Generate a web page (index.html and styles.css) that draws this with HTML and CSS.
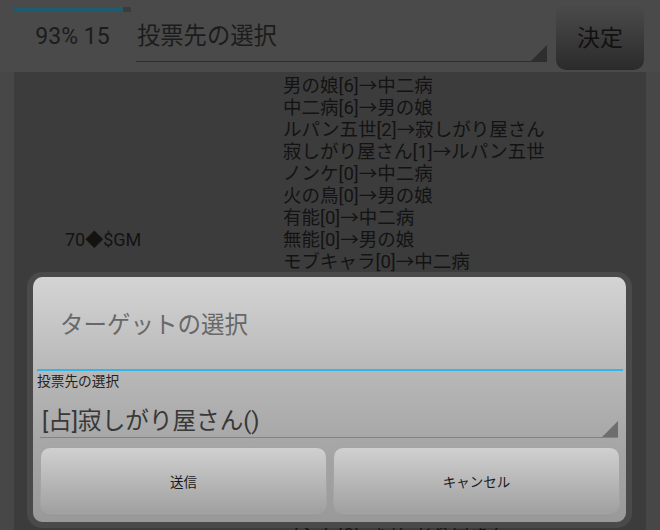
FILE: index.html
```html
<!DOCTYPE html>
<html lang="ja">
<head>
    <meta charset="UTF-8">
    <meta name="viewport" content="width=device-width, initial-scale=1.0">
    <title>投票先の選択</title>
    <link rel="stylesheet" href="styles.css">
</head>
<body>
    <div class="topbar">
        <div class="status">
            <div class="progress"><div class="progress-fill" style="width: 93%"></div></div>
            <div class="status-text">93% 15</div>
        </div>
        <div class="top-spinner">
            <span>投票先の選択</span>
            <span class="spinner-arrow"></span>
        </div>
        <button class="decide-button">決定</button>
    </div>

    <div class="content">
        <div class="log-row">
            <div class="log-name">70◆$GM</div>
            <div class="log-lines">
                <div>男の娘[6]→中二病</div>
                <div>中二病[6]→男の娘</div>
                <div>ルパン五世[2]→寂しがり屋さん</div>
                <div>寂しがり屋さん[1]→ルパン五世</div>
                <div>ノンケ[0]→中二病</div>
                <div>火の鳥[0]→男の娘</div>
                <div>有能[0]→中二病</div>
                <div>無能[0]→男の娘</div>
                <div>モブキャラ[0]→中二病</div>
                <div>男の娘[6]→中二病</div>
                <div>中二病[6]→男の娘</div>
                <div>ルパン五世[2]→寂しがり屋さん</div>
                <div>寂しがり屋さん[1]→ルパン五世</div>
                <div>ノンケ[0]→中二病</div>
                <div>火の鳥[0]→男の娘</div>
            </div>
        </div>
        <div class="log-row">
            <div class="log-name">69◆$GM</div>
            <div class="log-lines">
                <div>男の娘[5]→中二病</div>
                <div>中二病[5]→男の娘</div>
                <div>ルパン五世[2]→寂しがり屋さん</div>
                <div>寂しがり屋さん[1]→ルパン五世</div>
                <div>有能[0]→中二病</div>
                <div>ノンケ[0]→寂しがり屋さん</div>
            </div>
        </div>
    </div>

    <!-- ターゲット選択ダイアログ -->
    <div class="dialog">
        <div class="dialog-title">ターゲットの選択</div>
        <div class="dialog-divider"></div>
        <div class="dialog-label">投票先の選択</div>
        <div class="dialog-spinner">
            <span>[占]寂しがり屋さん()</span>
            <span class="spinner-arrow"></span>
        </div>
        <div class="dialog-buttons">
            <button class="dialog-button">送信</button>
            <button class="dialog-button">キャンセル</button>
        </div>
    </div>
</body>
</html>
```

FILE: styles.css
```css
html, body {
    height: 100%;
}
body {
    font-family: 'Roboto', 'Noto Sans CJK JP', sans-serif;
    margin: 0;
    padding: 0;
    background-color: #474747;
    overflow: hidden;
    position: relative;
}
/* 上部バー */
.topbar {
    display: flex;
    height: 72px;
    padding-left: 14px;
    background-color: #4a4a4a;
}
.status {
    width: 117px;
    padding-top: 7px;
}
.progress {
    height: 5px;
    background-color: #3c3c3c;
}
.progress-fill {
    height: 100%;
    background-color: #1f5b70;
}
.status-text {
    margin-top: 12px;
    font-size: 23px;
    line-height: 26px;
    text-align: center;
    color: #1c1c1c;
}
.top-spinner {
    display: flex;
    align-items: center;
    width: 411px;
    height: 62px;
    margin-left: 5px;
    padding: 6px 0 0 1px;
    box-sizing: border-box;
    border-bottom: 1px solid #2e2e2e;
    font-size: 23.3px;
    color: #1c1c1c;
}
.spinner-arrow {
    width: 16px;
    height: 16px;
    margin-left: auto;
    align-self: flex-end;
    background-color: #2e2e2e;
    clip-path: polygon(100% 0, 100% 100%, 0 100%);
}
.decide-button {
    width: 88px;
    height: 68px;
    margin: 2px 0 0 9px;
    border: none;
    border-radius: 10px;
    background: linear-gradient(#4c4c4c, #2b2b2b);
    font-family: inherit;
    font-size: 23px;
    color: #111;
    padding: 0;
}
/* ログ一覧 */
.content {
    margin: 0 14px;
    height: calc(100% - 72px);
    padding-top: 3px;
    box-sizing: border-box;
    background-color: #3c3c3c;
    overflow: hidden;
    color: #131313;
    font-size: 18.5px;
    line-height: 22px;
}
.log-row {
    display: flex;
    align-items: center;
    margin-bottom: 9px;
}
.log-name {
    width: 218px;
    padding-left: 51px;
    font-size: 18px;
}
.log-lines {
    white-space: nowrap;
}
/* ダイアログ */
.dialog {
    position: absolute;
    left: 27px;
    top: 272px;
    width: 605px;
    box-sizing: border-box;
    border-style: solid;
    border-color: #4a4a4a;
    border-width: 5px 6px 6px 6px;
    border-radius: 15px;
    background: linear-gradient(#d4d4d4, #b8b8b8 38%, #a8a8a8 65%, #999999);
    padding-bottom: 8px;
}
.dialog-title {
    display: flex;
    align-items: center;
    height: 92px;
    padding-left: 27px;
    font-size: 23.5px;
    color: #686868;
}
.dialog-divider {
    height: 2px;
    margin: 0 3px 0 4px;
    background-color: #33b5e5;
}
.dialog-label {
    height: 20px;
    margin-left: 4px;
    font-size: 13.7px;
    line-height: 20px;
    color: #222;
}
.dialog-spinner {
    display: flex;
    align-items: center;
    height: 47px;
    margin: 0 8px 0 7px;
    padding: 10px 0 0 2px;
    box-sizing: border-box;
    border-bottom: 1px solid #828282;
    font-size: 23.6px;
    color: #383838;
}
.dialog-spinner .spinner-arrow {
    background-color: #6e6e6e;
}
.dialog-buttons {
    display: flex;
    gap: 6px;
    margin: 9px 6px 0 7px;
}
.dialog-button {
    flex: 1;
    height: 67px;
    border: 1px solid #a4a4a4;
    border-radius: 10px;
    background: linear-gradient(#d0d0d0, #a0a0a0);
    font-family: inherit;
    font-size: 13.5px;
    color: #1a1a1a;
    padding: 0;
}
```
